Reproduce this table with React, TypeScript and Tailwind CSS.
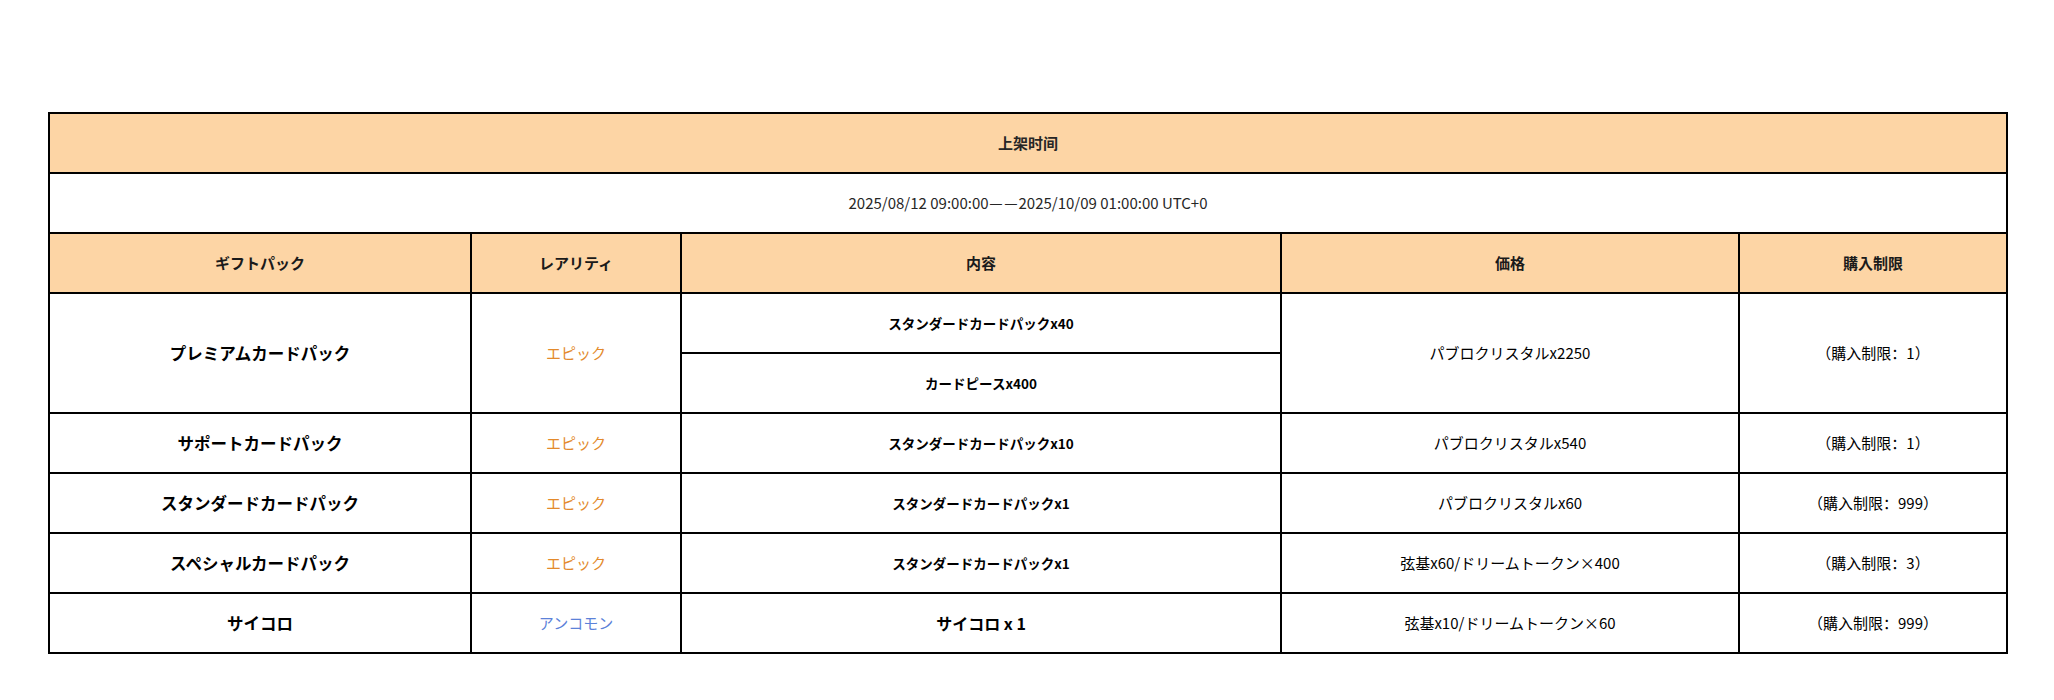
const packs = [
  { name: "サポートカードパック", rarity: "エピック", content: "スタンダードカードパックx10", price: "パブロクリスタルx540", limit: "（購入制限：1）" },
  { name: "スタンダードカードパック", rarity: "エピック", content: "スタンダードカードパックx1", price: "パブロクリスタルx60", limit: "（購入制限：999）" },
  { name: "スペシャルカードパック", rarity: "エピック", content: "スタンダードカードパックx1", price: "弦基x60/ドリームトークン×400", limit: "（購入制限：3）" },
];

const cell = "border-2 border-black text-center align-middle p-0";
const head = `${cell} bg-[#fdd5a5] text-[15px] font-bold text-[#1a1a1a]`;
const sc = "font-['Noto_Sans_CJK_SC',sans-serif]";
const limitCls = `${cell} ${sc} text-[15px]`;
const dash = "inline-block w-[15px] text-center";

export default function App() {
  return (
    <div className="min-h-[700px] bg-white pt-[112px] px-[48px] font-['Noto_Sans_CJK_JP','Noto_Sans_CJK_SC',sans-serif] text-black">
      <table className="w-[1958px] table-fixed border-collapse">
        <colgroup>
          <col className="w-[422px]" />
          <col className="w-[210px]" />
          <col className="w-[600px]" />
          <col className="w-[458px]" />
          <col className="w-[268px]" />
        </colgroup>
        <tbody>
          <tr className="h-[60px]">
            <td colSpan={5} className={`${head} ${sc} text-[#262626]`}>
              上架时间
            </td>
          </tr>
          <tr className="h-[60px]">
            <td colSpan={5} className={`${cell} ${sc} text-[15px] text-[#262626]`}>
              2025/08/12 09:00:00<span className={dash}>—</span><span className={dash}>—</span>2025/10/09 01:00:00 UTC+0
            </td>
          </tr>
          <tr className="h-[60px]">
            <td className={head}>ギフトパック</td>
            <td className={head}>レアリティ</td>
            <td className={head}>内容</td>
            <td className={head}>価格</td>
            <td className={head}>購入制限</td>
          </tr>

          {/* Premium pack spans two content rows */}
          <tr className="h-[60px]">
            <td rowSpan={2} className={`${cell} text-[16.5px] font-bold`}>プレミアムカードパック</td>
            <td rowSpan={2} className={`${cell} text-[15px] text-[#e38a2c]`}>エピック</td>
            <td className={`${cell} text-[13.5px] font-bold`}>スタンダードカードパックx40</td>
            <td rowSpan={2} className={`${cell} text-[15px]`}>パブロクリスタルx2250</td>
            <td rowSpan={2} className={limitCls}>（購入制限：1）</td>
          </tr>
          <tr className="h-[60px]">
            <td className={`${cell} text-[13.5px] font-bold`}>カードピースx400</td>
          </tr>

          {packs.map((p) => (
            <tr key={p.name} className="h-[60px]">
              <td className={`${cell} text-[16.5px] font-bold`}>{p.name}</td>
              <td className={`${cell} text-[15px] text-[#e38a2c]`}>{p.rarity}</td>
              <td className={`${cell} text-[13.5px] font-bold`}>{p.content}</td>
              <td className={`${cell} text-[15px]`}>{p.price}</td>
              <td className={limitCls}>{p.limit}</td>
            </tr>
          ))}

          <tr className="h-[60px]">
            <td className={`${cell} text-[16.5px] font-bold`}>サイコロ</td>
            <td className={`${cell} text-[15px] text-[#5c82d9]`}>アンコモン</td>
            <td className={`${cell} text-[16px] font-bold`}>サイコロ x 1</td>
            <td className={`${cell} text-[15px]`}>弦基x10/ドリームトークン×60</td>
            <td className={limitCls}>（購入制限：999）</td>
          </tr>
        </tbody>
      </table>
    </div>
  );
}
